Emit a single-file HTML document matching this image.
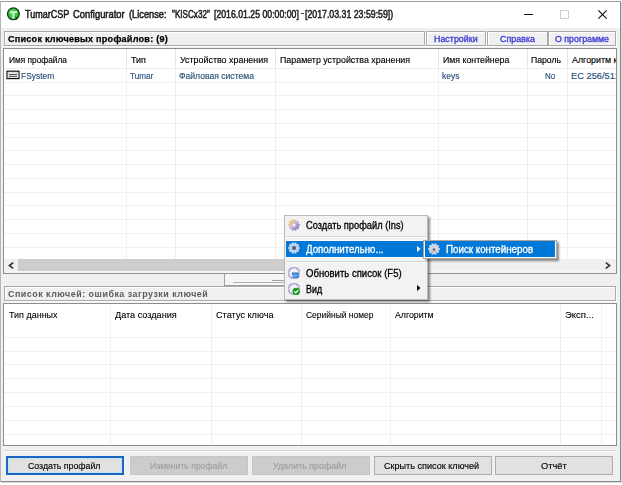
<!DOCTYPE html>
<html><head><meta charset="utf-8">
<style>
*{margin:0;padding:0;box-sizing:border-box}
html,body{width:622px;height:485px;overflow:hidden;background:#fff;font-family:"Liberation Sans",sans-serif;position:relative}
.a{position:absolute}
.t{position:absolute;white-space:nowrap;line-height:1;transform-origin:0 0;-webkit-text-stroke:0.15px currentColor}
</style></head><body>

<div class="a" style="left:0px;top:1px;width:621px;height:481px;background:#8a8a8a"></div>
<div class="a" style="left:0px;top:1px;width:621px;height:1px;background:#9a9a9a"></div>
<div class="a" style="left:0px;top:1px;width:1px;height:481px;background:#b5b5b5"></div>
<div class="a" style="left:621px;top:2px;width:1px;height:481px;background:#d8d8d8"></div>
<div class="a" style="left:1px;top:2px;width:619px;height:479px;background:#f0f0f0"></div>
<div class="a" style="left:1px;top:482px;width:621px;height:1px;background:#d8d8d8"></div>
<div class="a" style="left:1px;top:2px;width:619px;height:26px;background:#fff"></div>
<svg class="a" style="left:6px;top:7px" width="15" height="14" viewBox="0 0 15 14">
<defs><radialGradient id="tg" cx="0.4" cy="0.4" r="0.7"><stop offset="0" stop-color="#5be060"/><stop offset="1" stop-color="#1ea82a"/></radialGradient></defs>
<circle cx="7.4" cy="6.8" r="5.9" fill="url(#tg)" stroke="#0a3a10" stroke-width="1.3"/>
<path d="M4 4.2h7v1.9h-2.6v5.6h-1.9v-5.6h-2.5z" fill="#d8f5d8"/>
<path d="M9.2 9.6l2.6 1.6-1.4 1.6z" fill="#0a3a10"/>
</svg>
<div class="t " style="left:24.80px;top:10.00px;font-size:10.4px;color:#1a1a1a;transform:scaleX(0.8699);-webkit-text-stroke:0.5px currentColor">TumarCSP</div>
<div class="t " style="left:72.50px;top:10.00px;font-size:10.4px;color:#1a1a1a;transform:scaleX(0.9034);-webkit-text-stroke:0.5px currentColor">Configurator</div>
<div class="t " style="left:128.70px;top:10.00px;font-size:10.4px;color:#1a1a1a;transform:scaleX(0.8910);-webkit-text-stroke:0.5px currentColor">(License:</div>
<div class="t " style="left:172.00px;top:10.00px;font-size:10.4px;color:#1a1a1a;transform:scaleX(0.7824);-webkit-text-stroke:0.5px currentColor">"KISCx32"</div>
<div class="t " style="left:214.10px;top:10.00px;font-size:10.4px;color:#1a1a1a;transform:scaleX(0.8388);-webkit-text-stroke:0.5px currentColor">[2016.01.25 00:00:00]</div>
<div class="t " style="left:305.00px;top:10.00px;font-size:10.4px;color:#1a1a1a;transform:scaleX(0.8436);-webkit-text-stroke:0.5px currentColor">[2017.03.31 23:59:59])</div>
<div class="a" style="left:301px;top:13px;width:3px;height:1px;background:#444"></div>
<div class="a" style="left:524px;top:14px;width:9px;height:1px;background:#111"></div>
<div class="a" style="left:560px;top:10px;width:9px;height:9px;border:1px solid #cdcdcd"></div>
<svg class="a" style="left:598px;top:10px" width="9" height="9" viewBox="0 0 9 9"><path d="M0.3 0.3L8.7 8.7M8.7 0.3L0.3 8.7" stroke="#111" stroke-width="1.1"/></svg>
<div class="a" style="left:4px;top:31px;width:421px;height:15px;border:1px solid #a9a9a9;background:#f0f0f0;box-shadow:inset 1px 1px 0 #fff,1px 1px 0 #fff"></div>
<div class="t" style="left:8.00px;top:35px;font-size:9.1px;color:#000;letter-spacing:0.232px;transform:scaleX(0.999);font-weight:bold;-webkit-text-stroke:0;-webkit-text-stroke:0.25px currentColor">Список ключевых профайлов: (9)</div>
<div class="a" style="left:426px;top:31px;width:60px;height:15px;border:1px solid #a9a9a9;background:#f0f0f0;box-shadow:inset 1px 1px 0 #fff,1px 1px 0 #fff"></div>
<div class="t " style="left:434.30px;top:35.00px;font-size:8.8px;color:#3838d0;transform:scaleX(1.0106);-webkit-text-stroke:0.3px currentColor">Настройки</div>
<div class="a" style="left:487px;top:31px;width:61px;height:15px;border:1px solid #a9a9a9;background:#f0f0f0;box-shadow:inset 1px 1px 0 #fff,1px 1px 0 #fff"></div>
<div class="t " style="left:499.90px;top:35.00px;font-size:8.8px;color:#3838d0;transform:scaleX(1.0162);-webkit-text-stroke:0.3px currentColor">Справка</div>
<div class="a" style="left:548px;top:31px;width:68px;height:15px;border:1px solid #a9a9a9;background:#f0f0f0;box-shadow:inset 1px 1px 0 #fff,1px 1px 0 #fff"></div>
<div class="t " style="left:555.00px;top:35.00px;font-size:8.8px;color:#3838d0;transform:scaleX(1.0031);-webkit-text-stroke:0.3px currentColor">О программе</div>
<div class="a" style="left:3px;top:48px;width:614px;height:226px;border:1px solid #8e8e8e;background:#fff"></div>
<div class="a" style="left:4px;top:68px;width:612px;height:1px;background:#ececec"></div>
<div class="a" style="left:126px;top:49px;width:1px;height:19px;background:#e5e5e5"></div>
<div class="a" style="left:175px;top:49px;width:1px;height:19px;background:#e5e5e5"></div>
<div class="a" style="left:275px;top:49px;width:1px;height:19px;background:#e5e5e5"></div>
<div class="a" style="left:438px;top:49px;width:1px;height:19px;background:#e5e5e5"></div>
<div class="a" style="left:527px;top:49px;width:1px;height:19px;background:#e5e5e5"></div>
<div class="a" style="left:567px;top:49px;width:1px;height:19px;background:#e5e5e5"></div>
<div class="a" style="left:4px;top:82px;width:612px;height:1px;background:#f0f0f0"></div>
<div class="a" style="left:4px;top:95px;width:612px;height:1px;background:#f0f0f0"></div>
<div class="a" style="left:4px;top:109px;width:612px;height:1px;background:#f0f0f0"></div>
<div class="a" style="left:4px;top:123px;width:612px;height:1px;background:#f0f0f0"></div>
<div class="a" style="left:4px;top:137px;width:612px;height:1px;background:#f0f0f0"></div>
<div class="a" style="left:4px;top:150px;width:612px;height:1px;background:#f0f0f0"></div>
<div class="a" style="left:4px;top:164px;width:612px;height:1px;background:#f0f0f0"></div>
<div class="a" style="left:4px;top:178px;width:612px;height:1px;background:#f0f0f0"></div>
<div class="a" style="left:4px;top:192px;width:612px;height:1px;background:#f0f0f0"></div>
<div class="a" style="left:4px;top:205px;width:612px;height:1px;background:#f0f0f0"></div>
<div class="a" style="left:4px;top:219px;width:612px;height:1px;background:#f0f0f0"></div>
<div class="a" style="left:4px;top:233px;width:612px;height:1px;background:#f0f0f0"></div>
<div class="a" style="left:4px;top:247px;width:612px;height:1px;background:#f0f0f0"></div>
<div class="a" style="left:126px;top:69px;width:1px;height:190px;background:#f0f0f0"></div>
<div class="a" style="left:175px;top:69px;width:1px;height:190px;background:#f0f0f0"></div>
<div class="a" style="left:275px;top:69px;width:1px;height:190px;background:#f0f0f0"></div>
<div class="a" style="left:438px;top:69px;width:1px;height:190px;background:#f0f0f0"></div>
<div class="a" style="left:527px;top:69px;width:1px;height:190px;background:#f0f0f0"></div>
<div class="a" style="left:567px;top:69px;width:1px;height:190px;background:#f0f0f0"></div>
<div class="t " style="left:8.90px;top:56.00px;font-size:8.9px;color:#000;transform:scaleX(0.9383);">Имя профайла</div>
<div class="t " style="left:131.00px;top:56.00px;font-size:8.9px;color:#000;transform:scaleX(1.0107);">Тип</div>
<div class="t " style="left:179.80px;top:56.00px;font-size:8.9px;color:#000;transform:scaleX(1.0028);">Устройство хранения</div>
<div class="t " style="left:280.00px;top:56.00px;font-size:8.9px;color:#000;transform:scaleX(0.9972);">Параметр устройства хранения</div>
<div class="t " style="left:442.50px;top:56.00px;font-size:8.9px;color:#000;transform:scaleX(0.9874);">Имя контейнера</div>
<div class="t " style="left:531.30px;top:56.00px;font-size:8.9px;color:#000;transform:scaleX(0.9746);">Пароль</div>
<div class="a" style="left:568px;top:49px;width:48px;height:19px;overflow:hidden">
<div class="t " style="left:4.00px;top:7.00px;font-size:8.9px;color:#000;">Алгоритм ключа</div>
</div>
<svg class="a" style="left:6px;top:70px" width="14" height="10" viewBox="0 0 14 10">
<rect x="1" y="1.2" width="12" height="7.4" fill="#fff" stroke="#111" stroke-width="1.2"/>
<rect x="2.2" y="2.3" width="9.6" height="5.2" fill="none" stroke="#c8c8c8" stroke-width="0.6"/>
<path d="M3 4.4h8M3 6.3h8" stroke="#1a1a1a" stroke-width="0.85"/>
</svg>
<div class="t " style="left:20.80px;top:72.00px;font-size:9.3px;color:#2a5078;transform:scaleX(0.9049);">FSystem</div>
<div class="t " style="left:130.00px;top:72.00px;font-size:9.3px;color:#2a5078;transform:scaleX(0.8783);">Tumar</div>
<div class="t " style="left:178.50px;top:72.00px;font-size:9.3px;color:#2a5078;transform:scaleX(0.9240);">Файловая система</div>
<div class="t " style="left:441.60px;top:72.00px;font-size:9.3px;color:#2a5078;transform:scaleX(0.9104);">keys</div>
<div class="t " style="left:545.30px;top:72.00px;font-size:9.3px;color:#2a5078;transform:scaleX(0.8501);">No</div>
<div class="a" style="left:568px;top:69px;width:48px;height:13px;overflow:hidden">
<div class="t " style="left:3.00px;top:3.00px;font-size:9.3px;color:#2a5078;">EC 256/512</div>
</div>
<div class="a" style="left:4px;top:259px;width:612px;height:14px;background:#f0f0f0"></div>
<div class="a" style="left:4px;top:271px;width:612px;height:2px;background:#f6f6f6"></div>
<div class="a" style="left:18px;top:259px;width:400px;height:12px;background:#cdcdcd"></div>
<svg class="a" style="left:8px;top:262px" width="6" height="7" viewBox="0 0 6 7"><path d="M5.2 0.7L1.4 3.5L5.2 6.3" fill="none" stroke="#333" stroke-width="1.6"/></svg>
<svg class="a" style="left:605px;top:262px" width="6" height="7" viewBox="0 0 6 7"><path d="M0.8 0.7L4.6 3.5L0.8 6.3" fill="none" stroke="#333" stroke-width="1.6"/></svg>
<div class="a" style="left:224px;top:274px;width:70px;height:12px;border-left:1px solid #a0a0a0;border-bottom:1px solid #a0a0a0;background:#f6f6f6"></div>
<div class="a" style="left:233px;top:282px;width:60px;height:1px;background:#b0b0b0"></div>
<div class="a" style="left:272px;top:280px;width:20px;height:1px;background:#a0a0a0"></div>
<div class="a" style="left:4px;top:286px;width:612px;height:15px;border:1px solid #a9a9a9;background:#f0f0f0;box-shadow:inset 1px 1px 0 #fff,1px 1px 0 #fff"></div>
<div class="t" style="left:8.00px;top:290px;font-size:8.9px;color:#5a5a5a;letter-spacing:0.519px;transform:scaleX(0.999);font-weight:bold;-webkit-text-stroke:0;">Список ключей: ошибка загрузки ключей</div>
<div class="a" style="left:3px;top:303px;width:614px;height:143px;border:1px solid #8e8e8e;background:#fff"></div>
<div class="a" style="left:110px;top:304px;width:1px;height:141px;background:#f0f0f0"></div>
<div class="a" style="left:211px;top:304px;width:1px;height:141px;background:#f0f0f0"></div>
<div class="a" style="left:301px;top:304px;width:1px;height:141px;background:#f0f0f0"></div>
<div class="a" style="left:390px;top:304px;width:1px;height:141px;background:#f0f0f0"></div>
<div class="a" style="left:560px;top:304px;width:1px;height:141px;background:#f0f0f0"></div>
<div class="a" style="left:601px;top:304px;width:1px;height:141px;background:#f0f0f0"></div>
<div class="a" style="left:4px;top:337px;width:612px;height:1px;background:#f0f0f0"></div>
<div class="a" style="left:4px;top:351px;width:612px;height:1px;background:#f0f0f0"></div>
<div class="a" style="left:4px;top:364px;width:612px;height:1px;background:#f0f0f0"></div>
<div class="a" style="left:4px;top:378px;width:612px;height:1px;background:#f0f0f0"></div>
<div class="a" style="left:4px;top:392px;width:612px;height:1px;background:#f0f0f0"></div>
<div class="a" style="left:4px;top:406px;width:612px;height:1px;background:#f0f0f0"></div>
<div class="a" style="left:4px;top:420px;width:612px;height:1px;background:#f0f0f0"></div>
<div class="a" style="left:4px;top:434px;width:612px;height:1px;background:#f0f0f0"></div>
<div class="t " style="left:8.70px;top:311.00px;font-size:8.7px;color:#000;transform:scaleX(1.0330);-webkit-text-stroke:0.1px currentColor">Тип данных</div>
<div class="t " style="left:114.50px;top:311.00px;font-size:8.7px;color:#000;transform:scaleX(1.0481);-webkit-text-stroke:0.1px currentColor">Дата создания</div>
<div class="t " style="left:216.00px;top:311.00px;font-size:8.7px;color:#000;transform:scaleX(1.0547);-webkit-text-stroke:0.1px currentColor">Статус ключа</div>
<div class="t " style="left:305.90px;top:311.00px;font-size:8.7px;color:#000;transform:scaleX(0.9738);-webkit-text-stroke:0.1px currentColor">Серийный номер</div>
<div class="t " style="left:395.00px;top:311.00px;font-size:8.7px;color:#000;transform:scaleX(1.0087);-webkit-text-stroke:0.1px currentColor">Алгоритм</div>
<div class="t " style="left:565.00px;top:311.00px;font-size:8.7px;color:#000;transform:scaleX(1.0956);-webkit-text-stroke:0.1px currentColor">Эксп...</div>
<div class="a" style="left:4px;top:450px;width:612px;height:1px;background:#d6d6d6"></div>
<div class="a" style="left:4px;top:451px;width:612px;height:1px;background:#fafafa"></div>
<div class="a" style="left:6px;top:456px;width:118px;height:19px;border:2px solid #1a66c0;box-shadow:inset 0 0 0 1px #c4e2f8;background:#e1e1e1"></div>
<div class="t " style="left:28.00px;top:461.00px;font-size:9.5px;color:#000;transform:scaleX(0.9235);">Создать профайл</div>
<div class="a" style="left:130px;top:456px;width:118px;height:19px;border:1px solid #c6c6c6;background:#cccccc"></div>
<div class="t " style="left:149.80px;top:461.00px;font-size:9.5px;color:#9d9d9d;transform:scaleX(0.9067);">Изменить профайл</div>
<div class="a" style="left:252px;top:456px;width:118px;height:19px;border:1px solid #c6c6c6;background:#cccccc"></div>
<div class="t " style="left:273.40px;top:461.00px;font-size:9.5px;color:#9d9d9d;transform:scaleX(0.9330);">Удалить профайл</div>
<div class="a" style="left:374px;top:456px;width:118px;height:19px;border:1px solid #adadad;background:#e1e1e1"></div>
<div class="t " style="left:384.40px;top:461.00px;font-size:9.5px;color:#000;transform:scaleX(0.9561);">Скрыть список ключей</div>
<div class="a" style="left:495px;top:456px;width:118px;height:19px;border:1px solid #adadad;background:#e1e1e1"></div>
<div class="t " style="left:540.50px;top:461.00px;font-size:9.5px;color:#000;transform:scaleX(0.9804);">Отчёт</div>
<div class="a" style="left:286px;top:217px;width:144px;height:85px;background:rgba(0,0,0,.45);filter:blur(0.9px)"></div>
<div class="a" style="left:284px;top:215px;width:144px;height:85px;border:1px solid #b9b9b9;background:#f2f2f2"></div>
<svg class="a" style="left:288px;top:219px" width="12" height="12" viewBox="0 0 12 12"><defs><linearGradient id="g1" x1="0" y1="0" x2="1" y2="1"><stop offset="0" stop-color="#f6b820"/><stop offset="0.3" stop-color="#e8c890"/><stop offset="0.5" stop-color="#c0b4e0"/><stop offset="0.8" stop-color="#8a84b8"/><stop offset="1" stop-color="#505078"/></linearGradient></defs><path d="M10.55 4.83 L11.83 5.08 L11.83 6.92 L10.55 7.17 L10.37 7.73 L11.26 8.68 L10.17 10.17 L9.00 9.62 L8.52 9.97 L8.68 11.26 L6.92 11.83 L6.30 10.69 L5.70 10.69 L5.08 11.83 L3.32 11.26 L3.48 9.97 L3.00 9.62 L1.83 10.17 L0.74 8.68 L1.63 7.73 L1.45 7.17 L0.17 6.92 L0.17 5.08 L1.45 4.83 L1.63 4.27 L0.74 3.32 L1.83 1.83 L3.00 2.38 L3.48 2.03 L3.32 0.74 L5.08 0.17 L5.70 1.31 L6.30 1.31 L6.92 0.17 L8.68 0.74 L8.52 2.03 L9.00 2.38 L10.17 1.83 L11.26 3.32 L10.37 4.27Z" fill="url(#g1)"/><circle cx="6" cy="6" r="1.6" fill="#f4f0ff"/></svg>
<div class="t " style="left:306.30px;top:221.00px;font-size:10px;color:#000;transform:scaleX(0.9278);-webkit-text-stroke:0.3px currentColor">Создать профайл (Ins)</div>
<div class="a" style="left:287px;top:236px;width:139px;height:1px;background:#d4d4d4"></div>
<div class="a" style="left:287px;top:237px;width:139px;height:1px;background:#fff"></div>
<div class="a" style="left:286px;top:240px;width:137px;height:18px;background:#fdfdfd"></div>
<div class="a" style="left:286px;top:241px;width:137px;height:16px;background:#0078d7"></div>
<svg class="a" style="left:288px;top:242px" width="12" height="12" viewBox="0 0 12 12"><path d="M10.55 4.83 L11.83 5.08 L11.83 6.92 L10.55 7.17 L10.37 7.73 L11.26 8.68 L10.17 10.17 L9.00 9.62 L8.52 9.97 L8.68 11.26 L6.92 11.83 L6.30 10.69 L5.70 10.69 L5.08 11.83 L3.32 11.26 L3.48 9.97 L3.00 9.62 L1.83 10.17 L0.74 8.68 L1.63 7.73 L1.45 7.17 L0.17 6.92 L0.17 5.08 L1.45 4.83 L1.63 4.27 L0.74 3.32 L1.83 1.83 L3.00 2.38 L3.48 2.03 L3.32 0.74 L5.08 0.17 L5.70 1.31 L6.30 1.31 L6.92 0.17 L8.68 0.74 L8.52 2.03 L9.00 2.38 L10.17 1.83 L11.26 3.32 L10.37 4.27Z" fill="#c4d2ee"/><circle cx="6" cy="6" r="2" fill="#3a5a8a"/></svg>
<div class="t " style="left:306.10px;top:245.00px;font-size:10px;color:#fff;transform:scaleX(0.9651);-webkit-text-stroke:0.3px currentColor">Дополнительно...</div>
<svg class="a" style="left:417px;top:246px" width="4" height="6" viewBox="0 0 4 6"><path d="M0 0L3.5 3L0 6z" fill="#fff"/></svg>
<div class="a" style="left:287px;top:261px;width:139px;height:1px;background:#d4d4d4"></div>
<div class="a" style="left:287px;top:262px;width:139px;height:1px;background:#fff"></div>
<svg class="a" style="left:288px;top:267px" width="12" height="12" viewBox="0 0 12 12"><path d="M10.55 4.83 L11.83 5.08 L11.83 6.92 L10.55 7.17 L10.37 7.73 L11.26 8.68 L10.17 10.17 L9.00 9.62 L8.52 9.97 L8.68 11.26 L6.92 11.83 L6.30 10.69 L5.70 10.69 L5.08 11.83 L3.32 11.26 L3.48 9.97 L3.00 9.62 L1.83 10.17 L0.74 8.68 L1.63 7.73 L1.45 7.17 L0.17 6.92 L0.17 5.08 L1.45 4.83 L1.63 4.27 L0.74 3.32 L1.83 1.83 L3.00 2.38 L3.48 2.03 L3.32 0.74 L5.08 0.17 L5.70 1.31 L6.30 1.31 L6.92 0.17 L8.68 0.74 L8.52 2.03 L9.00 2.38 L10.17 1.83 L11.26 3.32 L10.37 4.27Z" fill="none" stroke="#b0acd0" stroke-width="1.2"/><path d="M4 5.5h6.5v2.5H4zM4.5 8.5h6v2.5h-6z" fill="#1a6fd0"/><path d="M5 7h4M5 9.8h4" stroke="#7fc0ff" stroke-width="0.8"/></svg>
<div class="t " style="left:306.00px;top:269.00px;font-size:10px;color:#000;transform:scaleX(0.9549);-webkit-text-stroke:0.3px currentColor">Обновить список (F5)</div>
<svg class="a" style="left:288px;top:283px" width="12" height="12" viewBox="0 0 12 12"><path d="M10.55 4.83 L11.83 5.08 L11.83 6.92 L10.55 7.17 L10.37 7.73 L11.26 8.68 L10.17 10.17 L9.00 9.62 L8.52 9.97 L8.68 11.26 L6.92 11.83 L6.30 10.69 L5.70 10.69 L5.08 11.83 L3.32 11.26 L3.48 9.97 L3.00 9.62 L1.83 10.17 L0.74 8.68 L1.63 7.73 L1.45 7.17 L0.17 6.92 L0.17 5.08 L1.45 4.83 L1.63 4.27 L0.74 3.32 L1.83 1.83 L3.00 2.38 L3.48 2.03 L3.32 0.74 L5.08 0.17 L5.70 1.31 L6.30 1.31 L6.92 0.17 L8.68 0.74 L8.52 2.03 L9.00 2.38 L10.17 1.83 L11.26 3.32 L10.37 4.27Z" fill="none" stroke="#b0acd0" stroke-width="1.2"/><circle cx="8.2" cy="8.4" r="3.7" fill="#1f9a2a"/><path d="M6.3 8.4l1.4 1.4 2.5-2.6" fill="none" stroke="#fff" stroke-width="1.2"/></svg>
<div class="t " style="left:306.00px;top:285.00px;font-size:10px;color:#000;transform:scaleX(0.8895);-webkit-text-stroke:0.3px currentColor">Вид</div>
<svg class="a" style="left:417px;top:285px" width="4" height="6" viewBox="0 0 4 6"><path d="M0 0L3.5 3L0 6z" fill="#000"/></svg>
<div class="a" style="left:426px;top:242px;width:133px;height:19px;background:rgba(0,0,0,.45);filter:blur(0.9px)"></div>
<div class="a" style="left:423px;top:240px;width:134px;height:19px;border:1px solid #b0a8a0;background:#fff"></div>
<div class="a" style="left:425px;top:241px;width:130px;height:16px;background:#0078d7"></div>
<svg class="a" style="left:428px;top:243px" width="12" height="12" viewBox="0 0 12 12"><path d="M10.55 4.83 L11.83 5.08 L11.83 6.92 L10.55 7.17 L10.37 7.73 L11.26 8.68 L10.17 10.17 L9.00 9.62 L8.52 9.97 L8.68 11.26 L6.92 11.83 L6.30 10.69 L5.70 10.69 L5.08 11.83 L3.32 11.26 L3.48 9.97 L3.00 9.62 L1.83 10.17 L0.74 8.68 L1.63 7.73 L1.45 7.17 L0.17 6.92 L0.17 5.08 L1.45 4.83 L1.63 4.27 L0.74 3.32 L1.83 1.83 L3.00 2.38 L3.48 2.03 L3.32 0.74 L5.08 0.17 L5.70 1.31 L6.30 1.31 L6.92 0.17 L8.68 0.74 L8.52 2.03 L9.00 2.38 L10.17 1.83 L11.26 3.32 L10.37 4.27Z" fill="#d4d8e4"/><path d="M4.5 6.5l1.5-1.5 1.5 1.5-1.5 1.5z" fill="#556"/><path d="M3.8 8.2l1.2 1.2M6.8 8.2l1.2 1.2" stroke="#667" stroke-width="0.9"/></svg>
<div class="t " style="left:446.10px;top:245.00px;font-size:10px;color:#fff;transform:scaleX(0.9765);-webkit-text-stroke:0.3px currentColor">Поиск контейнеров</div>
</body></html>
